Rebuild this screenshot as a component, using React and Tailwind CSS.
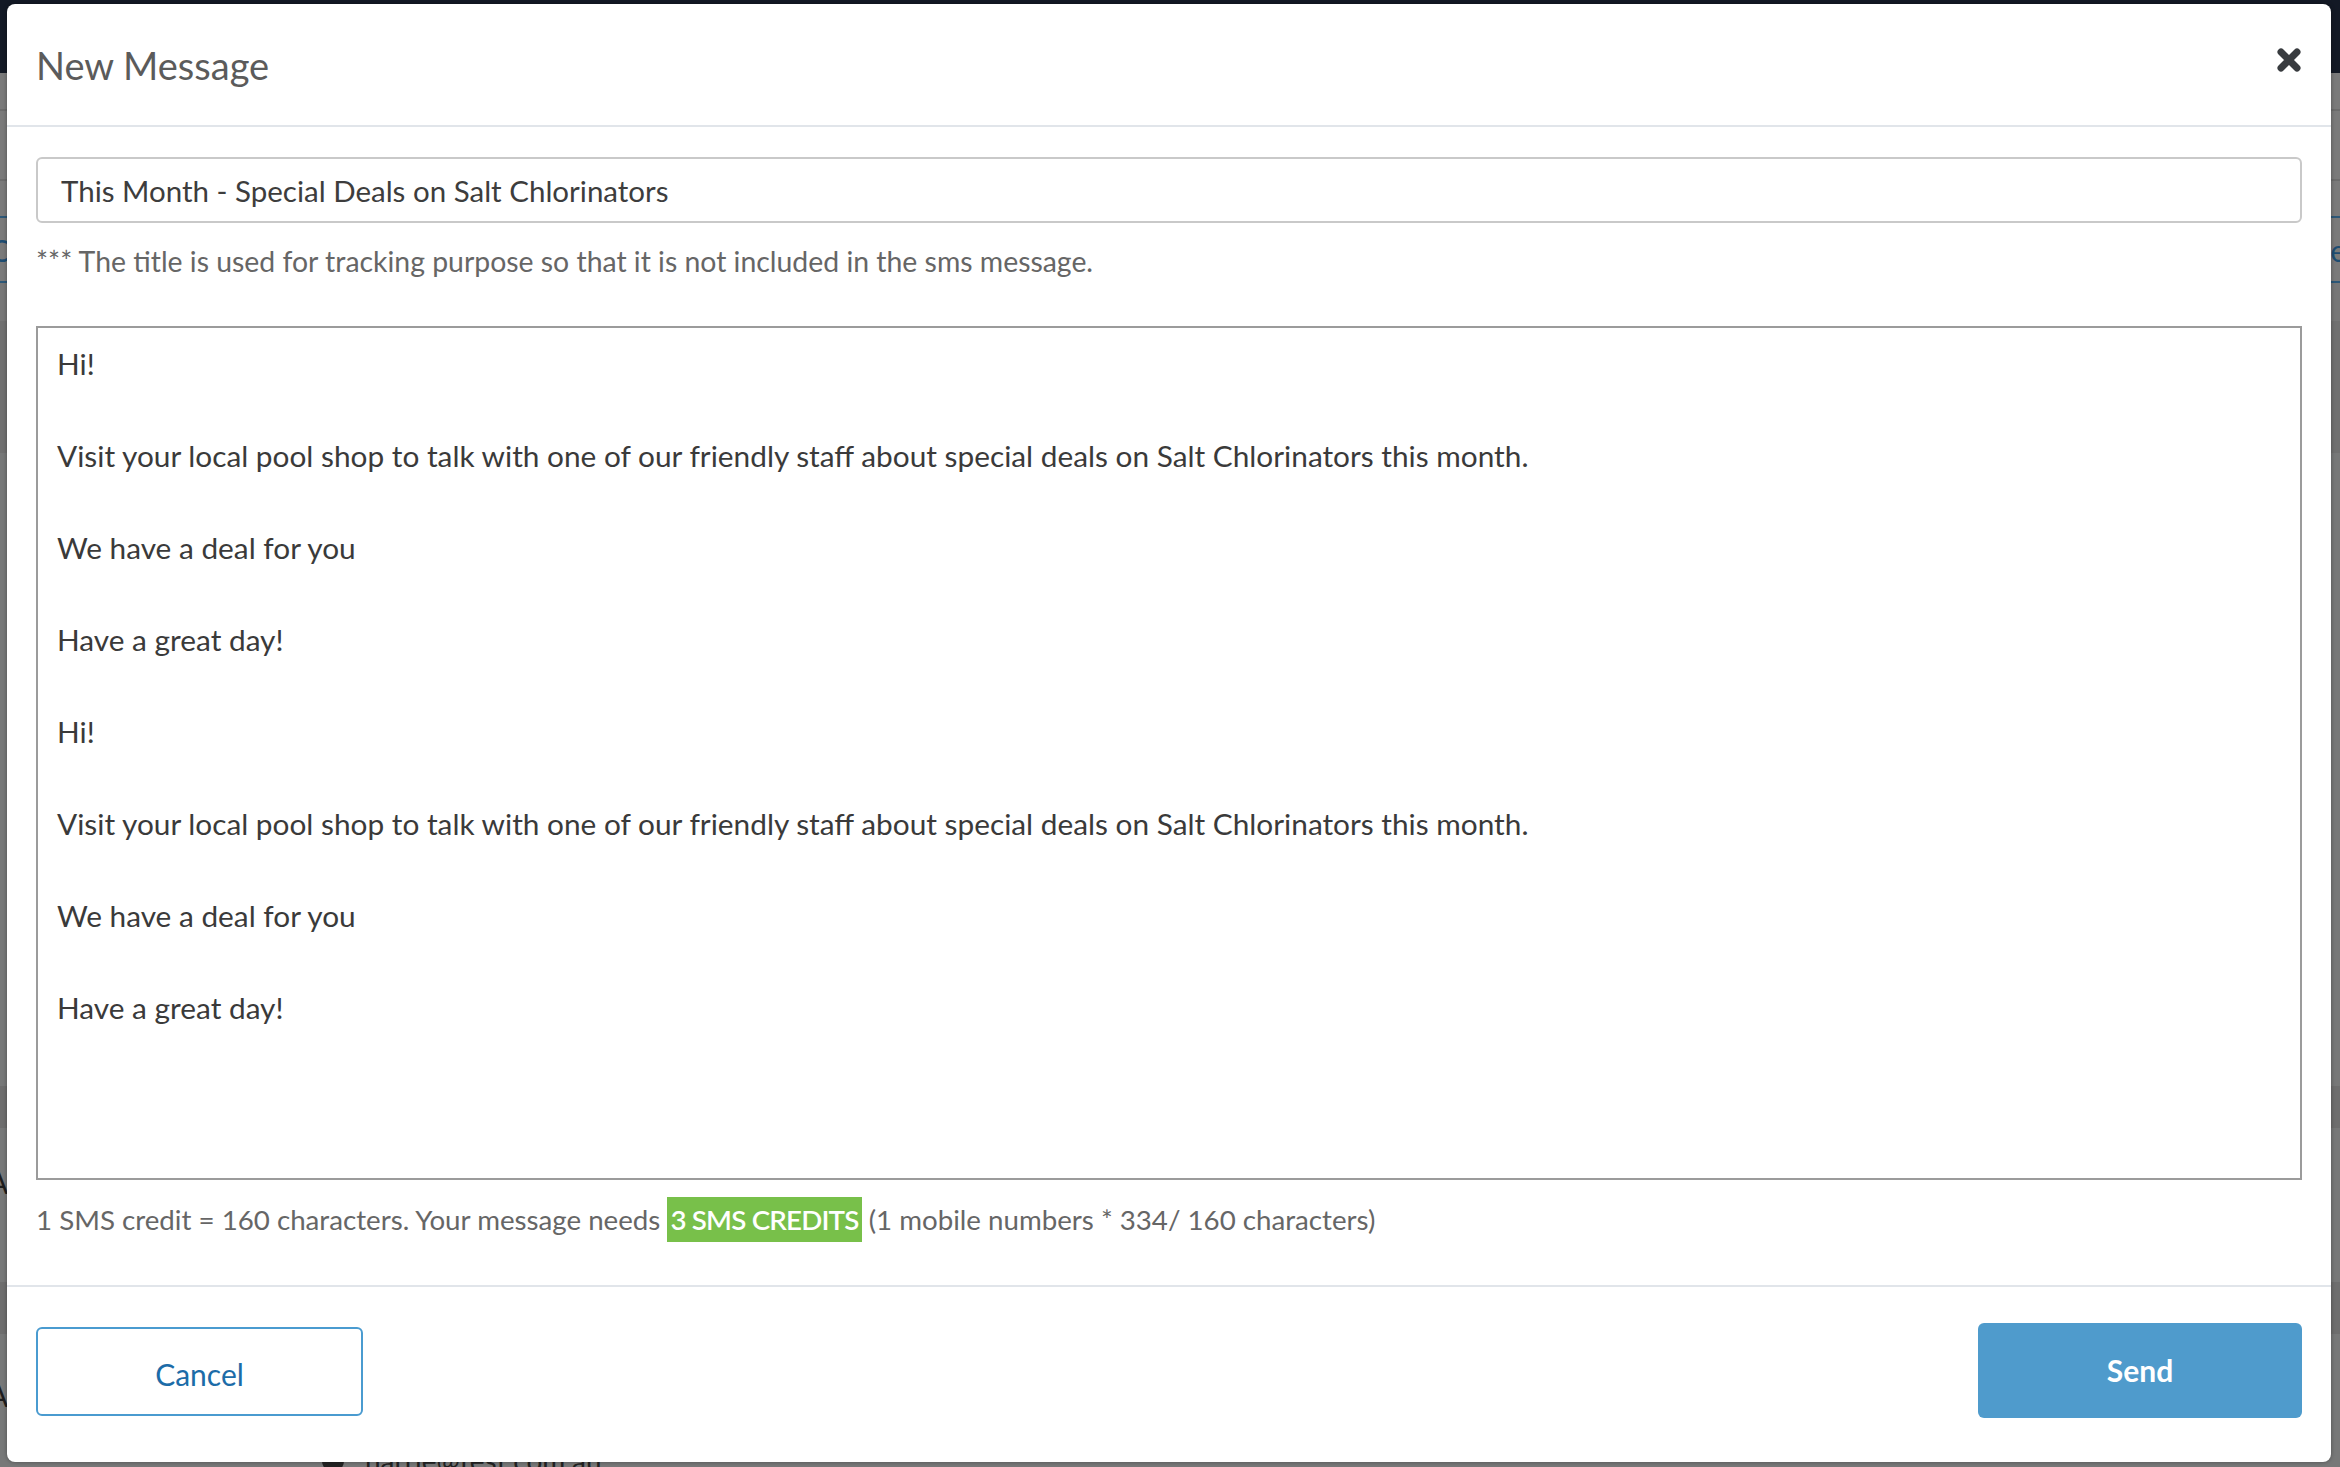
import React from "react";

const body = `Hi!

Visit your local pool shop to talk with one of our friendly staff about special deals on Salt Chlorinators this month.

We have a deal for you

Have a great day!

Hi!

Visit your local pool shop to talk with one of our friendly staff about special deals on Salt Chlorinators this month.

We have a deal for you

Have a great day!`;

function Backdrop() {
  return (
    <div className="absolute inset-0 flex flex-col font-['Lato',sans-serif]">
      <div className="h-[73px] bg-[#131925]" />
      <div className="h-[38px] bg-[#7a7a7a] border-b-2 border-[#6c6c6c]" />
      <div className="h-[70px] bg-[#7a7a7a] border-b-2 border-[#6c6c6c]" />
      <div className="h-[37px] bg-[#7a7a7a] border-b-2 border-[#2d5878]" />
      <div className="h-[65px] bg-[#7a7a7a] border-b-2 border-[#2d5878] flex items-center justify-between text-[30px] text-[#1e4d72] leading-none">
        <span className="-ml-[10px]">C</span>
        <span className="-mr-[6px]">e</span>
      </div>
      <div className="h-[38px] bg-[#777777]" />
      <div className="h-[132px] bg-[#707070]" />
      <div className="h-[633px] bg-[#777878]" />
      <div className="h-[42px] bg-[#6e6e6e]" />
      <div className="h-[34px] bg-[#777878]" />
      <div className="h-[40px] bg-[#777878] flex items-center text-[30px] text-[#1e1e1e] leading-none">
        <span className="-ml-[12px]">A</span>
      </div>
      <div className="h-[80px] bg-[#777878]" />
      <div className="h-[52px] bg-[#6e6e6e]" />
      <div className="flex-1 bg-[#777878] relative">
        <div className="absolute -left-[12px] top-[46px] text-[30px] text-[#1e1e1e] leading-none">A</div>
        <div className="absolute left-[322px] top-[116px] w-[22px] h-[22px] rounded-full bg-[#222]" />
        <div className="absolute left-[365px] top-[112px] text-[28px] text-[#222] leading-none">harrie@test.com.au</div>
      </div>
    </div>
  );
}

export default function App() {
  return (
    <div className="relative w-[2340px] h-[1467px] overflow-hidden font-['Lato',sans-serif]">
      <Backdrop />
      <div className="absolute left-[7px] top-[4px] w-[2324px] h-[1458px] bg-white rounded-[8px] flex flex-col shadow-[0_0_4px_rgba(0,0,0,0.35)]">
        <div className="h-[123px] flex items-center justify-between pl-[29px] pr-[30px] border-b-2 border-[#e1e5ea]">
          <h4 className="text-[38px] text-[#5b5b5b] leading-none pt-[1px]">New Message</h4>
          <svg width="24" height="24" viewBox="0 0 24 24" className="-mt-[10px]">
            <path d="M4 4 L20 20 M20 4 L4 20" stroke="#383b3f" strokeWidth="7" strokeLinecap="round" />
          </svg>
        </div>
        <div className="flex-1 flex flex-col px-[29px] pt-[30px]">
          <input
            readOnly
            value="This Month - Special Deals on Salt Chlorinators"
            className="h-[66px] w-full border-2 border-[#c9c9c9] rounded-[6px] pl-[23px] text-[29.5px] text-[#3d3d3d] outline-none"
          />
          <p className="mt-[24px] text-[28.4px] text-[#666] leading-none">
            *** The title is used for tracking purpose so that it is not included in the sms message.
          </p>
          <textarea
            readOnly
            value={body}
            className="mt-[51px] h-[854px] w-full border-2 border-[#9b9b9b] pl-[19px] pt-[13px] text-[29.8px] leading-[46px] text-[#3a3a3a] resize-none outline-none"
          />
          <div className="mt-[17px] flex items-center text-[27.7px] text-[#666] leading-none">
            <span>1 SMS credit = 160 characters. Your message needs&nbsp;</span>
            <span className="bg-[#78c04a] text-white font-semibold h-[45px] px-[3px] flex items-center tracking-[-0.8px]">3 SMS CREDITS</span>
            <span>&nbsp;(1 mobile numbers * 334/ 160 characters)</span>
          </div>
        </div>
        <div className="h-[177px] border-t-2 border-[#e1e5ea] flex items-center justify-between px-[29px]">
          <button className="w-[327px] h-[89px] mt-[-6px] pt-[6px] border-2 border-[#4a9bd0] rounded-[6px] text-[#1c6ca8] text-[30px] bg-white">
            Cancel
          </button>
          <button className="w-[324px] h-[95px] mt-[-8px] rounded-[6px] bg-[#4f9bcc] text-white text-[30px] font-bold">
            Send
          </button>
        </div>
      </div>
    </div>
  );
}
